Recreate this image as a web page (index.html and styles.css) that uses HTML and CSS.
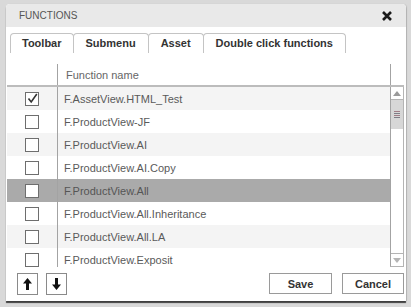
FILE: index.html
```html
<!DOCTYPE html>
<html>
<head>
<meta charset="utf-8">
<link rel="stylesheet" href="styles.css">
</head>
<body>
<div class="page">
  <div class="dialog">
    <div class="titlebar">
      <span class="title">FUNCTIONS</span>
      <svg class="close" width="10" height="10" viewBox="0 0 10 10"><path d="M1 1 L9 9 M9 1 L1 9" stroke="#1a1a1a" stroke-width="2.6" stroke-linecap="butt"/></svg>
    </div>
    <div class="tabs">
      <div class="tab">Toolbar</div>
      <div class="tab">Submenu</div>
      <div class="tab">Asset</div>
      <div class="tab active">Double click functions</div>
    </div>
    <div class="grid">
      <div class="head">
        <div class="c1"></div>
        <div class="c2 hname">Function name</div>
        <div class="sbhead"></div>
      </div>
      <div class="body">
        <div class="rows">
          <div class="row odd"><div class="c1"><span class="cb"><svg width="11" height="11" viewBox="0 0 11 11"><path d="M1.5 5.5 L4.2 9 L9.8 1" fill="none" stroke="#333" stroke-width="1.6"/></svg></span></div><div class="c2">F.AssetView.HTML_Test</div></div>
          <div class="row"><div class="c1"><span class="cb"></span></div><div class="c2">F.ProductView-JF</div></div>
          <div class="row odd"><div class="c1"><span class="cb"></span></div><div class="c2">F.ProductView.AI</div></div>
          <div class="row"><div class="c1"><span class="cb"></span></div><div class="c2">F.ProductView.AI.Copy</div></div>
          <div class="row selected"><div class="c1"><span class="cb"></span></div><div class="c2">F.ProductView.All</div></div>
          <div class="row"><div class="c1"><span class="cb"></span></div><div class="c2">F.ProductView.All.Inheritance</div></div>
          <div class="row odd"><div class="c1"><span class="cb"></span></div><div class="c2">F.ProductView.All.LA</div></div>
          <div class="row"><div class="c1"><span class="cb"></span></div><div class="c2">F.ProductView.Exposit</div></div>
        </div>
        <div class="scrollbar">
          <div class="sb-up"><svg width="8" height="5" viewBox="0 0 8 5"><path d="M4 0 L8 5 H0 Z" fill="#9a9a9a"/></svg></div>
          <div class="sb-thumb">
            <span class="grip g1"></span><span class="grip g2"></span><span class="grip g1"></span><span class="grip g2"></span>
          </div>
          <div class="sb-track"></div>
          <div class="sb-down"><svg width="8" height="5" viewBox="0 0 8 5"><path d="M0 0 H8 L4 5 Z" fill="#b5b5b5"/></svg></div>
        </div>
      </div>
    </div>
    <div class="footer">
      <div class="iconbtn"><svg width="9" height="12" viewBox="0 0 9 12"><path d="M4.5 0 L9 5.5 H6 V12 H3 V5.5 H0 Z" fill="#111"/></svg></div>
      <div class="iconbtn"><svg width="9" height="12" viewBox="0 0 9 12"><path d="M4.5 12 L9 6.5 H6 V0 H3 V6.5 H0 Z" fill="#111"/></svg></div>
      <div class="spacer"></div>
      <div class="btn save">Save</div>
      <div class="btn cancel">Cancel</div>
    </div>
  </div>
</div>
</body>
</html>
```
FILE: styles.css
```css
html, body {
  margin: 0;
  padding: 0;
}
body {
  width: 411px;
  height: 307px;
  overflow: hidden;
  background: #d9d9d9;
  font-family: "Liberation Sans", Arial, sans-serif;
}
.page {
  padding: 4px 5px 0 6px;
}
.dialog {
  width: 400px;
  height: 297px;
  background: #fff;
  border-radius: 4px 4px 0 0;
  box-shadow: 0 2px 1px rgba(0, 0, 0, 0.7), 1px 0 1px rgba(0, 0, 0, 0.12);
  display: flex;
  flex-direction: column;
}
.titlebar {
  height: 23px;
  flex: none;
  background: #e9e9e9;
  border-radius: 4px 4px 0 0;
  display: flex;
  align-items: center;
  justify-content: space-between;
  padding: 0 14px 0 13px;
}
.title {
  font-size: 10px;
  color: #555;
}
.close {
  display: block;
}
.tabs {
  display: flex;
  flex: none;
  padding: 6px 0 0 4px;
  height: 20px;
}
.tab {
  border: 1px solid #c4c4c4;
  border-bottom: none;
  border-radius: 4px 4px 0 0;
  padding: 0 12px;
  margin-right: -1px;
  font-weight: bold;
  font-size: 11px;
  line-height: 19px;
  color: #333;
  background: #fff;
}
.tab:first-child {
  padding: 0 11px;
}
.grid {
  margin: 11px 2px 0 1px;
  flex: none;
}
.head {
  display: flex;
  height: 21px;
  border-bottom: 2px solid #bcbcbc;
}
.c1 {
  width: 50px;
  flex: none;
  display: flex;
  align-items: center;
  justify-content: center;
}
.c2 {
  flex: 1;
  border-left: 1px solid #a3a3a3;
  font-size: 11px;
  color: #5a5a5a;
  display: flex;
  align-items: center;
  padding-left: 6px;
}
.hname {
  padding-left: 8px;
  color: #666;
  border-right: 1px solid #a3a3a3;
}
.sbhead {
  width: 13px;
  flex: none;
}
.body {
  display: flex;
  height: 180px;
  overflow: hidden;
}
.rows {
  flex: 1;
}
.row {
  display: flex;
  height: 23px;
  background: #fff;
}
.row.odd {
  background: #f4f4f4;
}
.row.selected {
  background: #aaaaaa;
}
.row.selected .c2 {
  color: #555;
}
.cb {
  width: 12px;
  height: 12px;
  border: 1px solid #6e6e6e;
  background: #fff;
  display: flex;
  align-items: center;
  justify-content: center;
}
.scrollbar {
  width: 12px;
  flex: none;
  border-left: 1px solid #a3a3a3;
  border-right: 1px solid #b4b4b4;
  border-bottom: 1px solid #b4b4b4;
  height: 179px;
  display: flex;
  flex-direction: column;
  background: #fff;
}
.sb-up {
  height: 12px;
  border-bottom: 1px solid #b4b4b4;
  display: flex;
  align-items: center;
  justify-content: center;
}
.sb-thumb {
  height: 29px;
  background: #d7d7d7;
  display: flex;
  flex-direction: column;
  align-items: center;
  justify-content: center;
  gap: 1px;
}
.grip {
  width: 6px;
  height: 1px;
}
.g1 {
  background: #a07d86;
}
.g2 {
  background: #7d7d86;
}
.sb-track {
  flex: 1;
}
.sb-down {
  height: 12px;
  border-top: 1px solid #b4b4b4;
  display: flex;
  align-items: center;
  justify-content: center;
}
.footer {
  display: flex;
  align-items: center;
  margin-top: 6px;
  height: 21px;
  padding: 0 2px 0 11px;
  gap: 8px;
}
.iconbtn {
  width: 19px;
  height: 20px;
  border: 1px solid #8a8a8a;
  display: flex;
  align-items: center;
  justify-content: center;
  background: #fff;
}
.spacer {
  flex: 1;
}
.btn {
  height: 19px;
  border: 1px solid #9a9a9a;
  background: #fff;
  font-size: 11px;
  font-weight: bold;
  color: #333;
  display: flex;
  align-items: center;
  justify-content: center;
}
.save {
  width: 61px;
  margin-right: 2px;
}
.cancel {
  width: 60px;
}
```
